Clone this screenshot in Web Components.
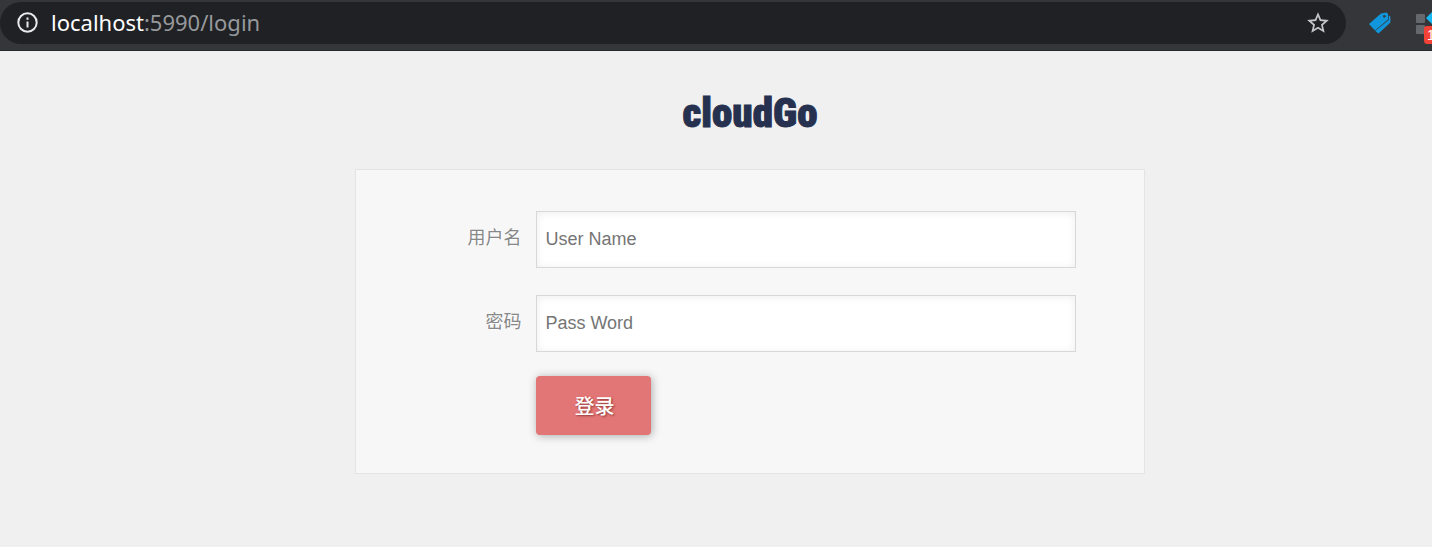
<!DOCTYPE html>
<html lang="zh-CN">
<head>
<meta charset="utf-8">
<title>cloudGo</title>
<style>
  html { background: #f0f0f0; }
  body { margin: 0; overflow: hidden; font-family: "Liberation Sans", "Noto Sans CJK SC", sans-serif; }
</style>
</head>
<body>
<browser-bar></browser-bar>
<login-page></login-page>
<script>
const define = (name, html) => customElements.define(name, class extends HTMLElement {
  constructor() {
    super();
    const t = document.createElement('template');
    t.innerHTML = html;
    this.attachShadow({ mode: 'open' }).append(t.content.cloneNode(true));
  }
});

define('address-field', `
<style>
  :host { display: flex; align-items: center; gap: 12px; flex: 1; height: 42px; box-sizing: border-box;
    padding: 0 15px 0 16px; border-radius: 21px; background: #202124; color: #96999c;
    font: 22px/30px "Noto Sans", "Open Sans", sans-serif; }
  svg { display: block; flex: none; }
  .url { flex: 1; white-space: nowrap; padding-bottom: 2px; }
  button { border: 0; padding: 0; background: none; }
</style>
<svg width="23" height="23" viewBox="0 0 23 23" fill="none" stroke="#e8eaed" stroke-width="2" aria-hidden="true">
  <circle cx="11.5" cy="11.5" r="9.2"/><path d="M11.5 10.5v6M11.5 6.5v2.2"/></svg>
<span class="url"><slot></slot></span>
<button aria-label="Bookmark"><svg width="26" height="26" viewBox="0 0 24 24" fill="#c4c6c9"><path d="M22 9.24l-7.19-.62L12 2 9.19 8.63 2 9.24l5.46 4.73L5.82 21 12 17.27 18.18 21l-1.63-7.03L22 9.24zM12 15.4l-3.76 2.27 1-4.28-3.32-2.88 4.38-.38L12 6.1l1.71 4.04 4.38.38-3.32 2.88 1 4.28L12 15.4z"/></svg></button>
`);

define('browser-bar', `
<style>
  :host { display: flex; align-items: center; height: 51px; padding-bottom: 5px; box-sizing: border-box;
    background: #35363a; border-bottom: 1px solid #28292b; overflow: hidden; }
  .host { color: #fff; }
  .tags { margin-left: 22px; }
  .ext { margin-left: 24px; }
  svg { display: block; flex: none; }
</style>
<address-field><span class="host">localhost</span>:5990/login</address-field>
<svg class="tags" width="24" height="24" viewBox="0 0 24 24" aria-hidden="true">
  <path fill="#1296db" d="M13 2.5 L18.5 1.5 L20 3 V8.5 L7 19.5 L1 13 Z"/>
  <path fill="#1296db" d="M20.7 4.5 L22.4 5.5 V11.5 L10.5 22.5 L7.2 20 L20.7 9 Z"/>
  <circle cx="16.3" cy="5.3" r="1.2" fill="#35363a"/>
</svg>
<svg class="ext" width="16" height="42" viewBox="0 0 16 42" role="img" aria-label="Extension">
  <rect x="0" y="12" width="9" height="9" rx="1" fill="#65686c"/>
  <rect x="0" y="23" width="9" height="9" rx="1" fill="#65686c"/>
  <path d="M10 16 L16 10 V22 Z" fill="#16b9f3"/>
  <path d="M16 24 H11 Q8 24 8 27 V38 Q8 42 11 42 H16 Z" fill="#f44336"/>
  <text x="11" y="38" font-family="Liberation Sans, sans-serif" font-size="14" fill="#fff">1</text>
</svg>
`);

customElements.define('form-row', class extends HTMLElement {
  constructor() {
    super();
    const t = document.createElement('template');
    t.innerHTML = `
<style>
  :host { display: grid; grid-template-columns: 24fr 76fr; align-items: center; }
  label { padding-right: 15px; padding-bottom: 2px; text-align: right; color: #888; font-size: 18px; line-height: 27px;
    text-shadow: 1px 1px 1px #fff; }
  input { width: 100%; height: 57px; box-sizing: border-box; padding: 0 8px; border: 1px solid #d8d8d8; border-radius: 0;
    background: #fff; box-shadow: inset 0 1px 8px #eee; color: #555; outline: 0;
    font: 18px "Liberation Sans", sans-serif; }
  input::placeholder { color: #757575; }
</style>
<label for="field"></label><input id="field">`;
    const root = this.attachShadow({ mode: 'open' });
    root.append(t.content.cloneNode(true));
    root.querySelector('label').textContent = this.getAttribute('label');
    const input = root.querySelector('input');
    input.placeholder = this.getAttribute('placeholder');
    input.type = this.getAttribute('type') || 'text';
  }
});

define('submit-button', `
<style>
  :host { display: block; }
  button { border: 0; border-radius: 4px; padding: 15px 37px 15px 38px; background: #e27575; color: #fff;
    font: 500 20px/29px "Noto Sans CJK SC", sans-serif; text-shadow: 1px 1px 2px #8f3a3a;
    box-shadow: 1px 1px 8px #aaa; display: block; }
</style>
<button type="submit"><slot></slot></button>
`);

define('login-page', `
<style>
  :host { display: flex; flex-direction: column; align-items: center; padding: 33px 0 73px 68px; }
  h1 { margin: 0 0 27px; color: #26304f; font: 900 41px/58px Impact, "Roboto Condensed", Roboto, sans-serif;
    -webkit-text-stroke: 1px #26304f; }
  form { width: 100%; max-width: 790px; box-sizing: border-box; display: flex; flex-direction: column; gap: 27px;
    padding: 41px 68px 38px 10px; border: 1px solid #e4e4e4; background: #f7f7f7; }
  .actions { display: grid; grid-template-columns: 24fr 76fr; margin-top: -3px; }
  submit-button { grid-column: 2; }
</style>
<h1>cloudGo</h1>
<form>
  <form-row label="用户名" placeholder="User Name"></form-row>
  <form-row label="密码" placeholder="Pass Word" type="password"></form-row>
  <div class="actions"><submit-button>登录</submit-button></div>
</form>
`);
</script>
</body>
</html>
